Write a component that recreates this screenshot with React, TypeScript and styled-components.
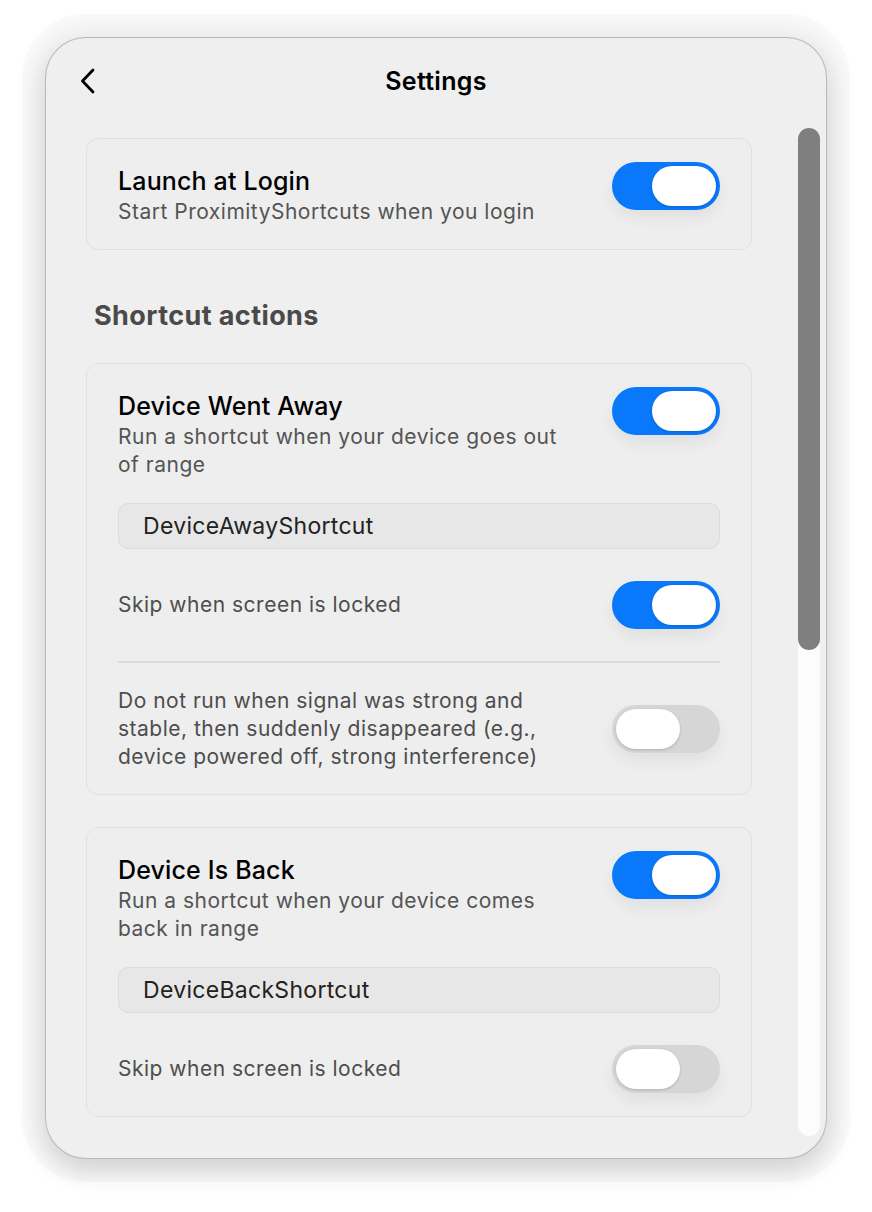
import React, { useState } from "react";
import styled, { createGlobalStyle } from "styled-components";

const GlobalStyle = createGlobalStyle`
  html, body {
    margin: 0;
    padding: 0;
    background: #ffffff;
  }
  body {
    font-family: Inter, "Noto Sans", "Liberation Sans", sans-serif;
    -webkit-font-smoothing: antialiased;
  }
`;

const Page = styled.div`
  width: 872px;
  height: 1212px;
  padding: 38px 0 0 46px;
  box-sizing: border-box;
`;

const Window = styled.div`
  position: relative;
  width: 780px;
  height: 1120px;
  border-radius: 40px;
  background: #efefef;
  overflow: hidden;
  display: flex;
  flex-direction: column;
  box-shadow:
    0 0 0 1px #b9b9b9,
    0 12px 28px rgba(0, 0, 0, 0.14),
    0 0 0 24px rgba(0, 0, 0, 0.018),
    0 0 22px 14px rgba(0, 0, 0, 0.04);
`;

const Header = styled.header`
  height: 90px;
  flex-shrink: 0;
  display: grid;
  grid-template-columns: 1fr auto 1fr;
  align-items: start;
  padding: 28px 34px 0;
  box-sizing: border-box;
`;

const BackButton = styled.button`
  justify-self: start;
  width: 20px;
  height: 30px;
  padding: 0;
  border: none;
  background: none;
  display: flex;
  align-items: center;
  cursor: pointer;
`;

const Title = styled.h1`
  margin: 0;
  font-size: 25px;
  line-height: 30px;
  font-weight: 600;
  letter-spacing: 0.3px;
  color: #000;
`;

const ScrollArea = styled.div`
  position: relative;
  flex: 1;
  overflow: hidden;
`;

const Content = styled.div`
  width: 666px;
  padding: 10px 0 40px 40px;
  display: flex;
  flex-direction: column;
`;

const Scrollbar = styled.div`
  position: absolute;
  top: 0;
  right: 6px;
  bottom: 22px;
  width: 22px;
  border-radius: 11px;
  background: #fcfcfc;
`;

const ScrollThumb = styled.div`
  width: 22px;
  height: 522px;
  border-radius: 11px;
  background: #7f7f7f;
`;

const Card = styled.section`
  background: #eeeeee;
  border: 1px solid #e0e0e0;
  border-radius: 12px;
  padding: 25px 31px 23px;
  & + & {
    margin-top: 32px;
  }
`;

const SectionTitle = styled.h2`
  margin: 49px 0 30px 8px;
  font-size: 27px;
  line-height: 34px;
  font-weight: 650;
  letter-spacing: 0.4px;
  color: #4a4a4a;
`;

const HeadRow = styled.div`
  display: flex;
  align-items: flex-start;
  justify-content: space-between;
  gap: 24px;
`;

const HeadText = styled.div`
  display: flex;
  flex-direction: column;
  max-width: 452px;
`;

const CardTitle = styled.div`
  font-size: 25px;
  line-height: 34px;
  font-weight: 550;
  letter-spacing: 0.15px;
  color: #000;
`;

const CardSubtitle = styled.div`
  font-size: 21px;
  line-height: 28px;
  letter-spacing: 0.5px;
  color: #545454;
`;

const ShortcutField = styled.input`
  display: block;
  width: 100%;
  box-sizing: border-box;
  margin-top: 24px;
  height: 46px;
  padding: 0 24px;
  border: 1px solid #dcdcdc;
  border-radius: 10px;
  background: #e7e7e7;
  font-family: inherit;
  font-size: 23px;
  letter-spacing: 0.3px;
  color: #222;
  outline: none;
`;

const OptionRow = styled.div<{ $gap: number }>`
  display: flex;
  align-items: center;
  justify-content: space-between;
  gap: 24px;
  margin-top: ${(p) => p.$gap}px;
  min-height: 48px;
`;

const OptionText = styled.div`
  font-size: 21px;
  line-height: 28px;
  letter-spacing: 0.5px;
  color: #4d4d4d;
  max-width: 436px;
`;

const Divider = styled.hr`
  margin: 32px 0 0;
  border: none;
  height: 2px;
  background: #dadada;
`;

const SwitchTrack = styled.button<{ $on: boolean; $offsetTop?: number }>`
  position: relative;
  flex-shrink: 0;
  width: 108px;
  height: 48px;
  padding: 0;
  border: none;
  border-radius: 24px;
  margin-top: ${(p) => p.$offsetTop ?? 0}px;
  background: ${(p) => (p.$on ? "#0a78fa" : "#d6d6d6")};
  box-shadow: 0 8px 16px rgba(0, 0, 0, 0.06);
  cursor: pointer;
`;

const SwitchThumb = styled.span<{ $on: boolean }>`
  position: absolute;
  top: 4px;
  left: ${(p) => (p.$on ? "40px" : "4px")};
  width: 64px;
  height: 40px;
  border-radius: 20px;
  background: #fff;
  box-shadow: 0 1px 3px rgba(0, 0, 0, 0.18);
  transition: left 0.2s;
`;

function Switch({ initial, offsetTop }: { initial: boolean; offsetTop?: number }) {
  const [on, setOn] = useState(initial);
  return (
    <SwitchTrack $on={on} $offsetTop={offsetTop} onClick={() => setOn((v) => !v)}>
      <SwitchThumb $on={on} />
    </SwitchTrack>
  );
}

function ChevronLeft() {
  return (
    <svg width="16" height="26" viewBox="0 0 16 26" fill="none">
      <path
        d="M13 2 L2.5 13 L13 24"
        stroke="#000"
        strokeWidth="2.8"
        strokeLinecap="round"
        strokeLinejoin="round"
      />
    </svg>
  );
}

type Action = {
  title: string;
  subtitle: string;
  shortcut: string;
  skipLocked: boolean;
  signalOption?: boolean;
};

const actions: Action[] = [
  {
    title: "Device Went Away",
    subtitle: "Run a shortcut when your device goes out of range",
    shortcut: "DeviceAwayShortcut",
    skipLocked: true,
    signalOption: false,
  },
  {
    title: "Device Is Back",
    subtitle: "Run a shortcut when your device comes back in range",
    shortcut: "DeviceBackShortcut",
    skipLocked: false,
  },
];

export default function App() {
  return (
    <>
      <GlobalStyle />
      <Page>
        <Window>
          <Header>
            <BackButton aria-label="Back">
              <ChevronLeft />
            </BackButton>
            <Title>Settings</Title>
            <span />
          </Header>
          <ScrollArea>
            <Content>
              <Card>
                <HeadRow>
                  <HeadText>
                    <CardTitle>Launch at Login</CardTitle>
                    <CardSubtitle>Start ProximityShortcuts when you login</CardSubtitle>
                  </HeadText>
                  <Switch initial={true} offsetTop={-2} />
                </HeadRow>
              </Card>

              <SectionTitle>Shortcut actions</SectionTitle>

              {actions.map((a) => (
                <Card key={a.title}>
                  <HeadRow>
                    <HeadText>
                      <CardTitle>{a.title}</CardTitle>
                      <CardSubtitle>{a.subtitle}</CardSubtitle>
                    </HeadText>
                    <Switch initial={true} offsetTop={-2} />
                  </HeadRow>
                  <ShortcutField defaultValue={a.shortcut} />
                  <OptionRow $gap={32}>
                    <OptionText>Skip when screen is locked</OptionText>
                    <Switch initial={a.skipLocked} />
                  </OptionRow>
                  {a.signalOption !== undefined && (
                    <>
                      <Divider />
                      <OptionRow $gap={24}>
                        <OptionText>
                          Do not run when signal was strong and stable, then suddenly
                          disappeared (e.g., device powered off, strong interference)
                        </OptionText>
                        <Switch initial={a.signalOption} />
                      </OptionRow>
                    </>
                  )}
                </Card>
              ))}
            </Content>
            <Scrollbar>
              <ScrollThumb />
            </Scrollbar>
          </ScrollArea>
        </Window>
      </Page>
    </>
  );
}
